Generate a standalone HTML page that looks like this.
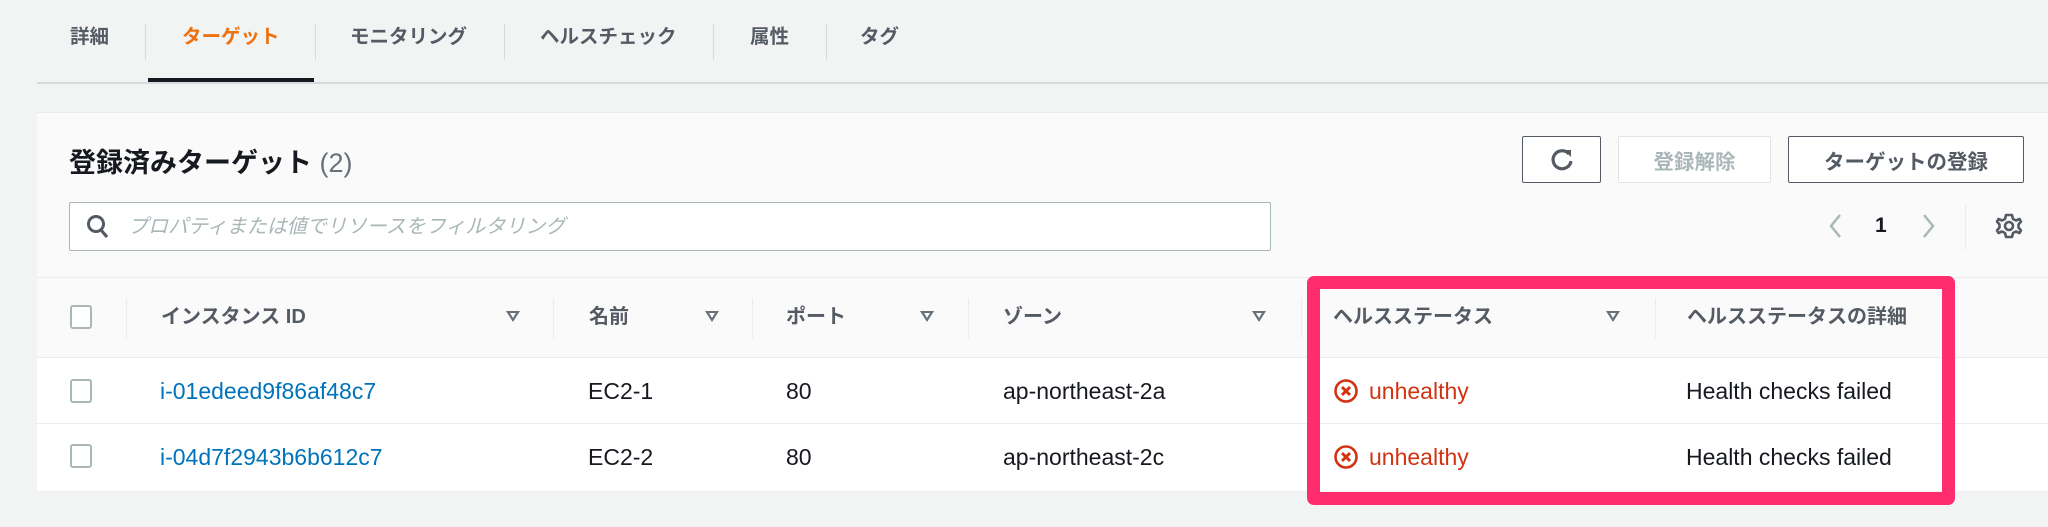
<!DOCTYPE html>
<html><head><meta charset="utf-8"><style>
body{margin:0;width:2048px;height:527px;background:#f2f3f3;position:relative;overflow:hidden;font-family:"Liberation Sans","Noto Sans CJK JP",sans-serif;}
.a{position:absolute;white-space:nowrap}
.tab{top:23px;font-size:19.5px;font-weight:bold;color:#545b64;line-height:28px}
.vd{position:absolute;width:1px;background:#d5dbdb}
.btn{position:absolute;top:136px;height:47px;border:1px solid #545b64;border-radius:2px;background:#fff;box-sizing:border-box;font-size:20.5px;font-weight:bold;color:#545b64;display:flex;align-items:center;justify-content:center}
.th{top:303px;font-size:20px;font-weight:bold;color:#545b64;line-height:28px}
.td{font-size:23px;color:#16191f;line-height:28px}
.cb{position:absolute;left:70px;width:18px;height:20px;border:2px solid #aab7b8;border-radius:3px;background:#fff}
.tri{position:absolute;width:0;height:0;border-left:7px solid transparent;border-right:7px solid transparent;border-top:11px solid #687078;top:311px}
.tri::after{content:"";position:absolute;left:-3px;top:-9px;border-left:3px solid transparent;border-right:3px solid transparent;border-top:5px solid #fafafa}
</style></head><body>
<div class="a tab" style="left:70px">詳細</div>
<div class="a tab" style="left:182px;color:#ec7211">ターゲット</div>
<div class="a tab" style="left:350px">モニタリング</div>
<div class="a tab" style="left:540px">ヘルスチェック</div>
<div class="a tab" style="left:750px">属性</div>
<div class="a tab" style="left:860px">タグ</div>
<div class="vd" style="left:145px;top:24px;height:36px"></div>
<div class="vd" style="left:315px;top:24px;height:36px"></div>
<div class="vd" style="left:504px;top:24px;height:36px"></div>
<div class="vd" style="left:713px;top:24px;height:36px"></div>
<div class="vd" style="left:826px;top:24px;height:36px"></div>
<div class="a" style="left:37px;top:82px;width:2011px;height:2px;background:#d5dbdb"></div>
<div class="a" style="left:148px;top:78px;width:166px;height:4px;background:#16191f"></div>

<div class="a" style="left:37px;top:112px;width:2011px;height:378px;background:#fafafa;border-top:1px solid #eaeded"></div>
<div class="a" style="left:69px;top:145px;font-size:27px;font-weight:bold;color:#16191f;line-height:36px">登録済みターゲット <span style="font-weight:normal;color:#687078">(2)</span></div>
<div class="btn" style="left:1522px;width:79px"><svg width="30" height="30" viewBox="0 0 30 30"><path d="M22 9 A9 9 0 1 0 24 16" fill="none" stroke="#545b64" stroke-width="3.2"/><path d="M17 5 L24 5 L24 12 Z" fill="#545b64"/></svg></div>
<div class="btn" style="left:1618px;width:153px;border-color:#e1e5e5;color:#aab7b8">登録解除</div>
<div class="btn" style="left:1788px;width:236px">ターゲットの登録</div>

<div class="a" style="left:69px;top:202px;width:1202px;height:49px;background:#fff;border:1px solid #aab7b8;border-radius:2px;box-sizing:border-box"></div>
<svg class="a" style="left:86px;top:214px" width="24" height="26" viewBox="0 0 24 26"><circle cx="10" cy="10" r="7.5" fill="none" stroke="#545b64" stroke-width="3"/><path d="M15 16 L21 23" stroke="#545b64" stroke-width="3.2"/></svg>
<div class="a" style="left:128px;top:213px;font-size:20px;font-style:italic;color:#aab7b8;line-height:28px">プロパティまたは値でリソースをフィルタリング</div>
<svg class="a" style="left:1826px;top:212px" width="18" height="28" viewBox="0 0 18 28"><path d="M14 3 L5 14 L14 25" fill="none" stroke="#aab7b8" stroke-width="2.5"/></svg>
<div class="a" style="left:1875px;top:212px;font-size:21px;font-weight:bold;color:#16191f;line-height:28px">1</div>
<svg class="a" style="left:1920px;top:212px" width="18" height="28" viewBox="0 0 18 28"><path d="M4 3 L13 14 L4 25" fill="none" stroke="#aab7b8" stroke-width="2.5"/></svg>
<div class="vd" style="left:1965px;top:204px;height:46px;background:#eaeded"></div>
<svg class="a" style="left:1995px;top:212px" width="28" height="28" viewBox="0 0 28 28"><path d="M14 3 L17 3 L18 7 L21 8.5 L24.5 7 L26 9.5 L23.5 12.5 L23.5 15.5 L26 18.5 L24.5 21 L21 19.5 L18 21 L17 25 L11 25 L10 21 L7 19.5 L3.5 21 L2 18.5 L4.5 15.5 L4.5 12.5 L2 9.5 L3.5 7 L7 8.5 L10 7 L11 3 Z" fill="none" stroke="#545b64" stroke-width="2.6" stroke-linejoin="round"/><circle cx="14" cy="14" r="4" fill="none" stroke="#545b64" stroke-width="2.6"/></svg>

<div class="a" style="left:37px;top:277px;width:2011px;height:1px;background:#eaeded"></div>
<div class="a" style="left:37px;top:357px;width:2011px;height:133px;background:#fff"></div>
<div class="a" style="left:37px;top:357px;width:2011px;height:1px;background:#eaeded"></div>
<div class="a" style="left:37px;top:423px;width:2011px;height:1px;background:#eaeded"></div>
<div class="cb" style="top:305px"></div>
<div class="cb" style="top:379px"></div>
<div class="cb" style="top:444px"></div>
<div class="vd" style="left:126px;top:298px;height:40px;background:#eaeded"></div>
<div class="vd" style="left:553px;top:298px;height:40px;background:#eaeded"></div>
<div class="vd" style="left:752px;top:298px;height:40px;background:#eaeded"></div>
<div class="vd" style="left:968px;top:298px;height:40px;background:#eaeded"></div>
<div class="vd" style="left:1301px;top:298px;height:40px;background:#eaeded"></div>
<div class="vd" style="left:1655px;top:298px;height:40px;background:#eaeded"></div>
<div class="a th" style="left:161px">インスタンス ID</div>
<div class="a th" style="left:589px">名前</div>
<div class="a th" style="left:786px">ポート</div>
<div class="a th" style="left:1003px">ゾーン</div>
<div class="a th" style="left:1333px">ヘルスステータス</div>
<div class="a th" style="left:1687px">ヘルスステータスの詳細</div>
<div class="tri" style="left:506px"></div>
<div class="tri" style="left:705px"></div>
<div class="tri" style="left:920px"></div>
<div class="tri" style="left:1252px"></div>
<div class="tri" style="left:1606px"></div>

<div class="a td" style="left:160px;top:377px;color:#0073bb">i-01edeed9f86af48c7</div>
<div class="a td" style="left:588px;top:377px">EC2-1</div>
<div class="a td" style="left:786px;top:377px">80</div>
<div class="a td" style="left:1003px;top:377px">ap-northeast-2a</div>
<div class="a td" style="left:160px;top:443px;color:#0073bb">i-04d7f2943b6b612c7</div>
<div class="a td" style="left:588px;top:443px">EC2-2</div>
<div class="a td" style="left:786px;top:443px">80</div>
<div class="a td" style="left:1003px;top:443px">ap-northeast-2c</div>

<svg class="a" style="left:1333px;top:378px" width="26" height="26" viewBox="0 0 26 26"><circle cx="13" cy="13" r="10.5" fill="none" stroke="#d13212" stroke-width="2.6"/><path d="M9 9 L17 17 M17 9 L9 17" stroke="#d13212" stroke-width="3"/></svg>
<div class="a td" style="left:1369px;top:377px;color:#d13212">unhealthy</div>
<svg class="a" style="left:1333px;top:444px" width="26" height="26" viewBox="0 0 26 26"><circle cx="13" cy="13" r="10.5" fill="none" stroke="#d13212" stroke-width="2.6"/><path d="M9 9 L17 17 M17 9 L9 17" stroke="#d13212" stroke-width="3"/></svg>
<div class="a td" style="left:1369px;top:443px;color:#d13212">unhealthy</div>
<div class="a td" style="left:1686px;top:377px">Health checks failed</div>
<div class="a td" style="left:1686px;top:443px">Health checks failed</div>

<div class="a" style="left:1307px;top:276px;width:648px;height:229px;border:13px solid #ff2d6e;border-radius:7px;box-sizing:border-box"></div>
</body></html>
